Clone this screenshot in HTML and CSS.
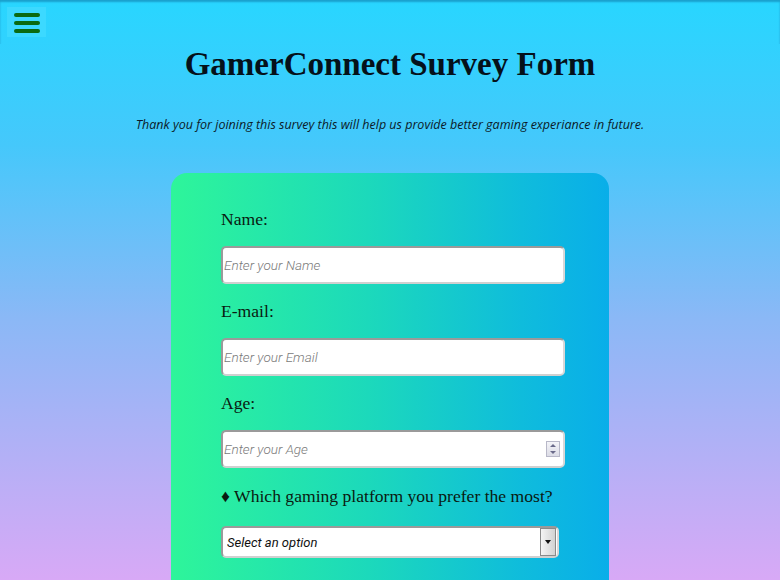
FILE: index.html
```html
<!DOCTYPE html>
<html lang="en">
<head>
<meta charset="utf-8">
<title>GamerConnect Survey Form</title>
<link rel="stylesheet" href="styles.css">
</head>
<body>
<nav class="topbar">
  <button class="menu-btn" aria-label="Menu">
    <svg width="26" height="22" viewBox="0 0 26 22"><rect x="0" y="2" width="26" height="4" rx="2" fill="#0b6a12"/><rect x="0" y="10" width="26" height="4" rx="2" fill="#0b6a12"/><rect x="0" y="18" width="26" height="4" rx="2" fill="#0b6a12"/></svg>
  </button>
</nav>
<header class="hero">
  <h1 class="title">GamerConnect Survey Form</h1>
  <p class="subtitle">Thank you for joining this survey this will help us provide better gaming experiance in future.</p>
</header>
<main class="card">
  <form class="form">
    <label class="label" for="name">Name:</label>
    <input class="field" id="name" type="text" placeholder="Enter your Name">
    <label class="label" for="email">E-mail:</label>
    <input class="field" id="email" type="email" placeholder="Enter your Email">
    <label class="label" for="age">Age:</label>
    <div class="field-wrap">
      <input class="field" id="age" type="number" placeholder="Enter your Age">
      <span class="spin"><span class="spin-up"></span><span class="spin-down"></span></span>
    </div>
    <label class="label question" for="platform">&#9830; Which gaming platform you prefer the most?</label>
    <div class="select-wrap">
      <select class="select" id="platform">
        <option>Select an option</option>
        <option>PC</option>
        <option>Console</option>
        <option>Mobile</option>
      </select>
      <span class="select-arrow"></span>
    </div>
  </form>
</main>
</body>
</html>
```
FILE: styles.css
```css
* { box-sizing: border-box; }
html, body { height: 100%; }
body {
  margin: 0;
  overflow: hidden;
  background: linear-gradient(180deg, #28d6ff 0%, #45c8fb 25%, #8bb8f6 55%, #d8a9f6 100%);
  font-family: "Liberation Serif", serif;
}
.topbar {
  height: 44px;
  padding: 7px;
  box-shadow: inset 0 2px 2px rgba(0, 60, 110, 0.35);
}
.menu-btn {
  width: 39px;
  height: 30px;
  border: 0;
  padding: 0;
  background: #3cd9ff;
  display: flex;
  align-items: center;
  justify-content: center;
}
.hero {
  text-align: center;
  margin-top: -44px;
  padding-top: 44px;
}
.title {
  margin: 0;
  font-family: "Liberation Serif", serif;
  font-weight: bold;
  font-size: 33px;
  line-height: 40px;
  color: #05111a;
}
.subtitle {
  margin: 33px 0 0;
  font-family: "Open Sans", sans-serif;
  font-style: italic;
  font-size: 12.5px;
  line-height: 16px;
  color: #0c1a28;
}
.card {
  width: 438px;
  margin: 40px auto 0;
  border-radius: 16px 16px 0 0;
  background: linear-gradient(90deg, #2ef59a 0%, #1cd9bb 45%, #0fbcdc 80%, #09aee9 100%);
  padding: 36px 44px 60px 50px;
  min-height: 500px;
}
.form { display: flex; flex-direction: column; }
.label {
  font-size: 17.6px;
  line-height: 20px;
  color: #0a1a10;
  margin-bottom: 17px;
}
.field {
  width: 344px;
  height: 38px;
  border: 2px solid #9a9a9a;
  border-right-color: #d8d8d8;
  border-bottom-color: #d0d0d0;
  border-radius: 5px;
  background: #fff;
  padding: 0 1px;
  font-family: Roboto, sans-serif;
  font-style: italic;
  font-weight: 300;
  font-size: 13.5px;
  margin-bottom: 17px;
}
.field::placeholder { color: #7a7a7a; }
.field-wrap { position: relative; width: 344px; margin-bottom: 18px; }
.field-wrap .field { margin-bottom: 0; }
input[type=number]::-webkit-inner-spin-button,
input[type=number]::-webkit-outer-spin-button { -webkit-appearance: none; margin: 0; }
input[type=number] { -moz-appearance: textfield; }
.spin {
  position: absolute;
  right: 5px;
  top: 11px;
  width: 14px;
  height: 16px;
  border: 1px solid #b8b8c8;
  background: linear-gradient(#f4f4f8, #dcdce6);
  display: flex;
  flex-direction: column;
  align-items: center;
  justify-content: space-around;
}
.spin-up, .spin-down { width: 0; height: 0; border-left: 3px solid transparent; border-right: 3px solid transparent; }
.spin-up { border-bottom: 3px solid #6a6a8a; }
.spin-down { border-top: 3px solid #6a6a8a; }
.question { margin-bottom: 20px; }
.select-wrap { position: relative; width: 338px; }
.select {
  -webkit-appearance: none;
  appearance: none;
  width: 338px;
  height: 32px;
  border: 2px solid #9a9a9a;
  border-right-color: #d8d8d8;
  border-bottom-color: #d0d0d0;
  border-radius: 5px;
  background: #fff;
  padding: 0 4px;
  font-family: Roboto, sans-serif;
  font-style: italic;
  font-size: 13px;
  color: #111;
}
.select-arrow {
  position: absolute;
  right: 3px;
  top: 2px;
  width: 16px;
  height: 28px;
  border: 1px solid #8a8a8a;
  background: linear-gradient(90deg, #f4f4f4, #d2d2d2);
  display: flex;
  align-items: center;
  justify-content: center;
}
.select-arrow::after {
  content: "";
  border-left: 3.5px solid transparent;
  border-right: 3.5px solid transparent;
  border-top: 4px solid #111;
}
```
